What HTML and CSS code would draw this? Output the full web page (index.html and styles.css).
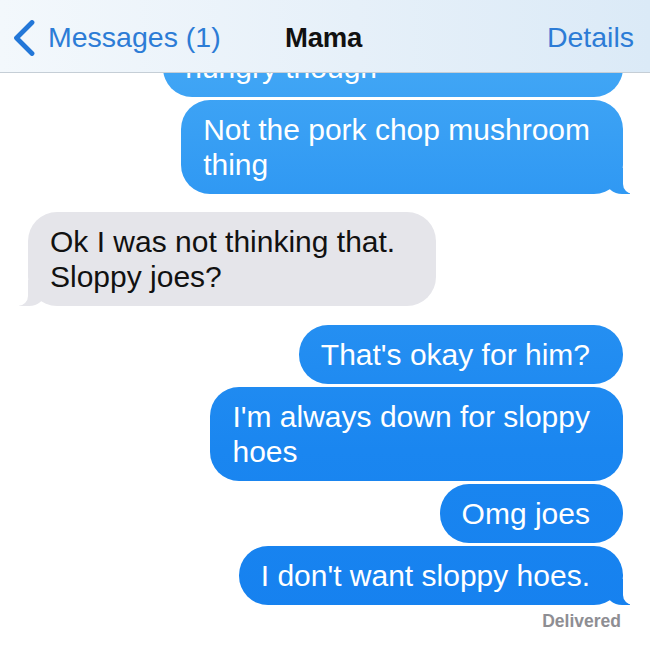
FILE: index.html
```html
<!DOCTYPE html>
<html lang="en">
<head>
<meta charset="utf-8">
<title>Mama</title>
<link rel="stylesheet" href="styles.css">
</head>
<body>
<div class="screen">
  <header class="navbar">
    <a class="nav-back">
      <svg class="chevron" viewBox="0 0 22 36" width="22" height="36" aria-hidden="true">
        <polyline points="19,2.5 3.5,18 19,33.5" fill="none" stroke="currentColor" stroke-width="4.8" stroke-linecap="round" stroke-linejoin="round"/>
      </svg>
      <span>Messages (1)</span>
    </a>
    <div class="nav-title">Mama</div>
    <a class="nav-details">Details</a>
  </header>

  <main class="thread">
    <div class="msg out">Something easy, I'm not really,<br>hungry though</div>
    <div class="msg out tail">Not the pork chop mushroom<br>thing</div>

    <div class="msg in tail">Ok I was not thinking that.<br>Sloppy joes?</div>

    <div class="msg out">That's okay for him?</div>
    <div class="msg out">I'm always down for sloppy<br>hoes</div>
    <div class="msg out">Omg joes</div>
    <div class="msg out tail">I don't want sloppy hoes.</div>
    <div class="status">Delivered</div>
  </main>
</div>
</body>
</html>
```

FILE: styles.css
```css
* { box-sizing: border-box; }

html, body {
  margin: 0;
  padding: 0;
  background: #ffffff;
}

body {
  width: 650px;
  height: 650px;
  overflow: hidden;
  font-family: "Liberation Sans", Arial, sans-serif;
}

.screen {
  width: 650px;
  height: 650px;
  display: flex;
  flex-direction: column;
  overflow: hidden;
  background: #ffffff;
}

/* ---------- navigation bar ---------- */
.navbar {
  flex: 0 0 73px;
  display: grid;
  grid-template-columns: 1fr auto 1fr;
  align-items: center;
  padding: 3px 16px 0 13px;
  background: linear-gradient(90deg, #f3f8fc 0%, #e6f0f9 55%, #dbeaf7 100%);
  border-bottom: 1px solid #c5ced6;
  font-size: 28.5px;
}

.nav-back {
  display: flex;
  align-items: center;
  gap: 13px;
  color: #2c7cd6;
}

.chevron {
  display: block;
  color: #2377d8;
}

.nav-title {
  color: #111111;
  font-weight: 700;
  font-size: 27.5px;
  letter-spacing: -0.2px;
}

.nav-details {
  justify-self: end;
  color: #2c7cd6;
}

/* ---------- message thread (anchored to the bottom, older messages clipped at top) ---------- */
.thread {
  flex: 1 1 auto;
  min-height: 0;
  overflow: hidden;
  display: flex;
  flex-direction: column;
  justify-content: flex-end;
  padding: 0 27px 19px 28px;
}

.msg {
  position: relative;
  flex: 0 0 auto;
  font-size: 30px;
  line-height: 35px;
  padding: 12px 33px 12px 22px;
  border-radius: 29px;
}

.out {
  align-self: flex-end;
  color: #ffffff;
  background: linear-gradient(180deg, #4aadf6 0px, #2f98f3 200px, #1a86f0 450px, #1580ef 650px) fixed;
}

.in {
  align-self: flex-start;
  color: #111111;
  background: #e5e5ea;
  padding-right: 41px;
}

.out + .out { margin-top: 3px; }
.out + .in { margin-top: 18px; }
.in + .out { margin-top: 19px; }

/* tails */
.out.tail::before,
.out.tail::after,
.in.tail::before,
.in.tail::after {
  content: "";
  position: absolute;
  bottom: 0;
  height: 26px;
}

.out.tail::before {
  right: -7px;
  width: 24px;
  background: inherit;
  border-bottom-left-radius: 16px 14px;
}

.out.tail::after {
  right: -26px;
  width: 26px;
  background: #ffffff;
  border-bottom-left-radius: 10px;
}

.in.tail::before {
  left: -9px;
  width: 26px;
  background: #e5e5ea;
  border-bottom-right-radius: 16px 14px;
}

.in.tail::after {
  left: -26px;
  width: 26px;
  background: #ffffff;
  border-bottom-right-radius: 10px;
}

.status {
  flex: 0 0 auto;
  align-self: flex-end;
  margin: 6px 2px 0 0;
  font-size: 17.5px;
  line-height: 20px;
  font-weight: 700;
  color: #8e8e93;
}
```
